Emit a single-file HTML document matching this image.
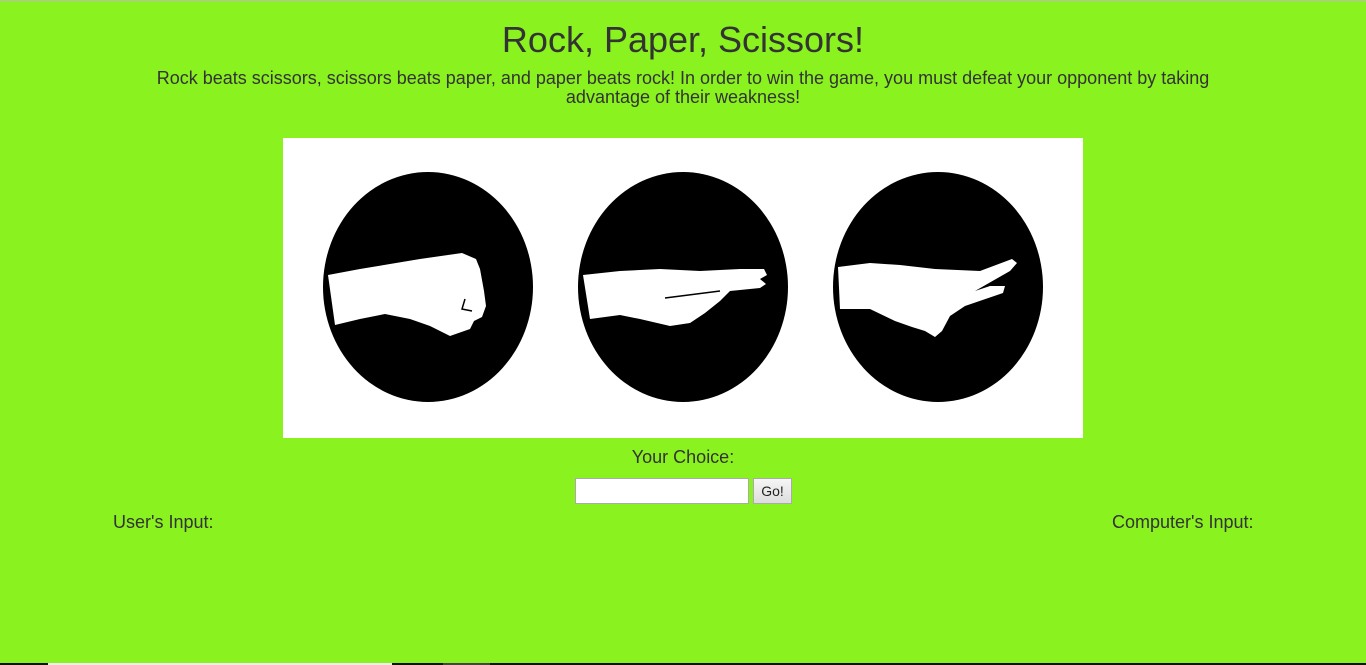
<!DOCTYPE html>
<html><head><meta charset="utf-8"><style>
html,body{margin:0;padding:0}
body{width:1366px;height:665px;background:#8af21e;font-family:"Liberation Sans",Arial,sans-serif;color:#333;position:relative;overflow:hidden;border-top:1px solid #bbb;box-sizing:border-box}
h1{position:absolute;top:19px;left:0;width:1366px;text-align:center;margin:0;font-weight:normal;font-size:36px;line-height:40px}
.sub{position:absolute;top:68px;left:150px;width:1066px;text-align:center;font-size:18px;line-height:19px}
.img{position:absolute;left:283px;top:137px;width:800px;height:300px;background:#fff}
.yc{position:absolute;top:446px;left:0;width:1366px;text-align:center;font-size:18px}
input{position:absolute;left:575px;top:477px;width:174px;height:26px;box-sizing:border-box;border:1px solid #aaa;background:#fff;margin:0}
button{position:absolute;left:753px;top:477px;width:39px;height:26px;box-sizing:border-box;border:1px solid #aaa;background:linear-gradient(#f6f6f6,#ddd);font:14px "Liberation Sans",sans-serif;color:#222;padding:0;margin:0}
.l{position:absolute;top:511px;left:113px;font-size:18px}
.r{position:absolute;top:511px;left:1112px;font-size:18px}
.bar{position:absolute;bottom:0;height:2px}
</style></head><body>
<h1>Rock, Paper, Scissors!</h1>
<div class="sub">Rock beats scissors, scissors beats paper, and paper beats rock! In order to win the game, you must defeat your opponent by taking advantage of their weakness!</div>
<div class="img"><svg width="800" height="300" viewBox="283 137 800 300">
<ellipse cx="428" cy="286" rx="105" ry="115" fill="#000"/>
<ellipse cx="683" cy="286" rx="105" ry="115" fill="#000"/>
<ellipse cx="938" cy="286" rx="105" ry="115" fill="#000"/>
<path d="M328 274 L360 268 L390 263 L420 258 L462 252 L476 258 L480 268 L484 290 L486 305 L482 316 L474 320 L470 328 L450 335 L430 325 L410 318 L385 313 L360 318 L335 324 Z" fill="#fff"/>
<path d="M465 298 L462 308 L472 310" stroke="#000" stroke-width="1.5" fill="none"/>
<path d="M583 274 L620 270 L660 268 L700 270 L740 268 L764 268 L767 274 L760 278 L766 283 L760 287 L730 290 L720 300 L705 312 L690 322 L670 325 L640 318 L620 314 L590 318 Z" fill="#fff"/>
<path d="M665 297 L720 290" stroke="#000" stroke-width="1.5" fill="none"/>
<path d="M838 266 L870 262 L900 264 L935 268 L980 270 L1012 258 L1017 262 L1010 270 L975 290 L990 285 L1005 285 L1003 292 L965 305 L950 315 L942 330 L935 336 L925 330 L912 326 L895 320 L870 308 L840 308 Z" fill="#fff"/>
</svg></div>
<div class="yc">Your Choice:</div>
<input type="text"><button>Go!</button>
<div class="l">User's Input:</div>
<div class="r">Computer's Input:</div>
<div class="bar" style="left:0;width:48px;background:#111"></div>
<div class="bar" style="left:48px;width:344px;background:#eee"></div>
<div class="bar" style="left:392px;width:51px;background:#111"></div>
<div class="bar" style="left:443px;width:47px;background:#444"></div>
<div class="bar" style="left:490px;width:876px;background:#111"></div>
</body></html>
